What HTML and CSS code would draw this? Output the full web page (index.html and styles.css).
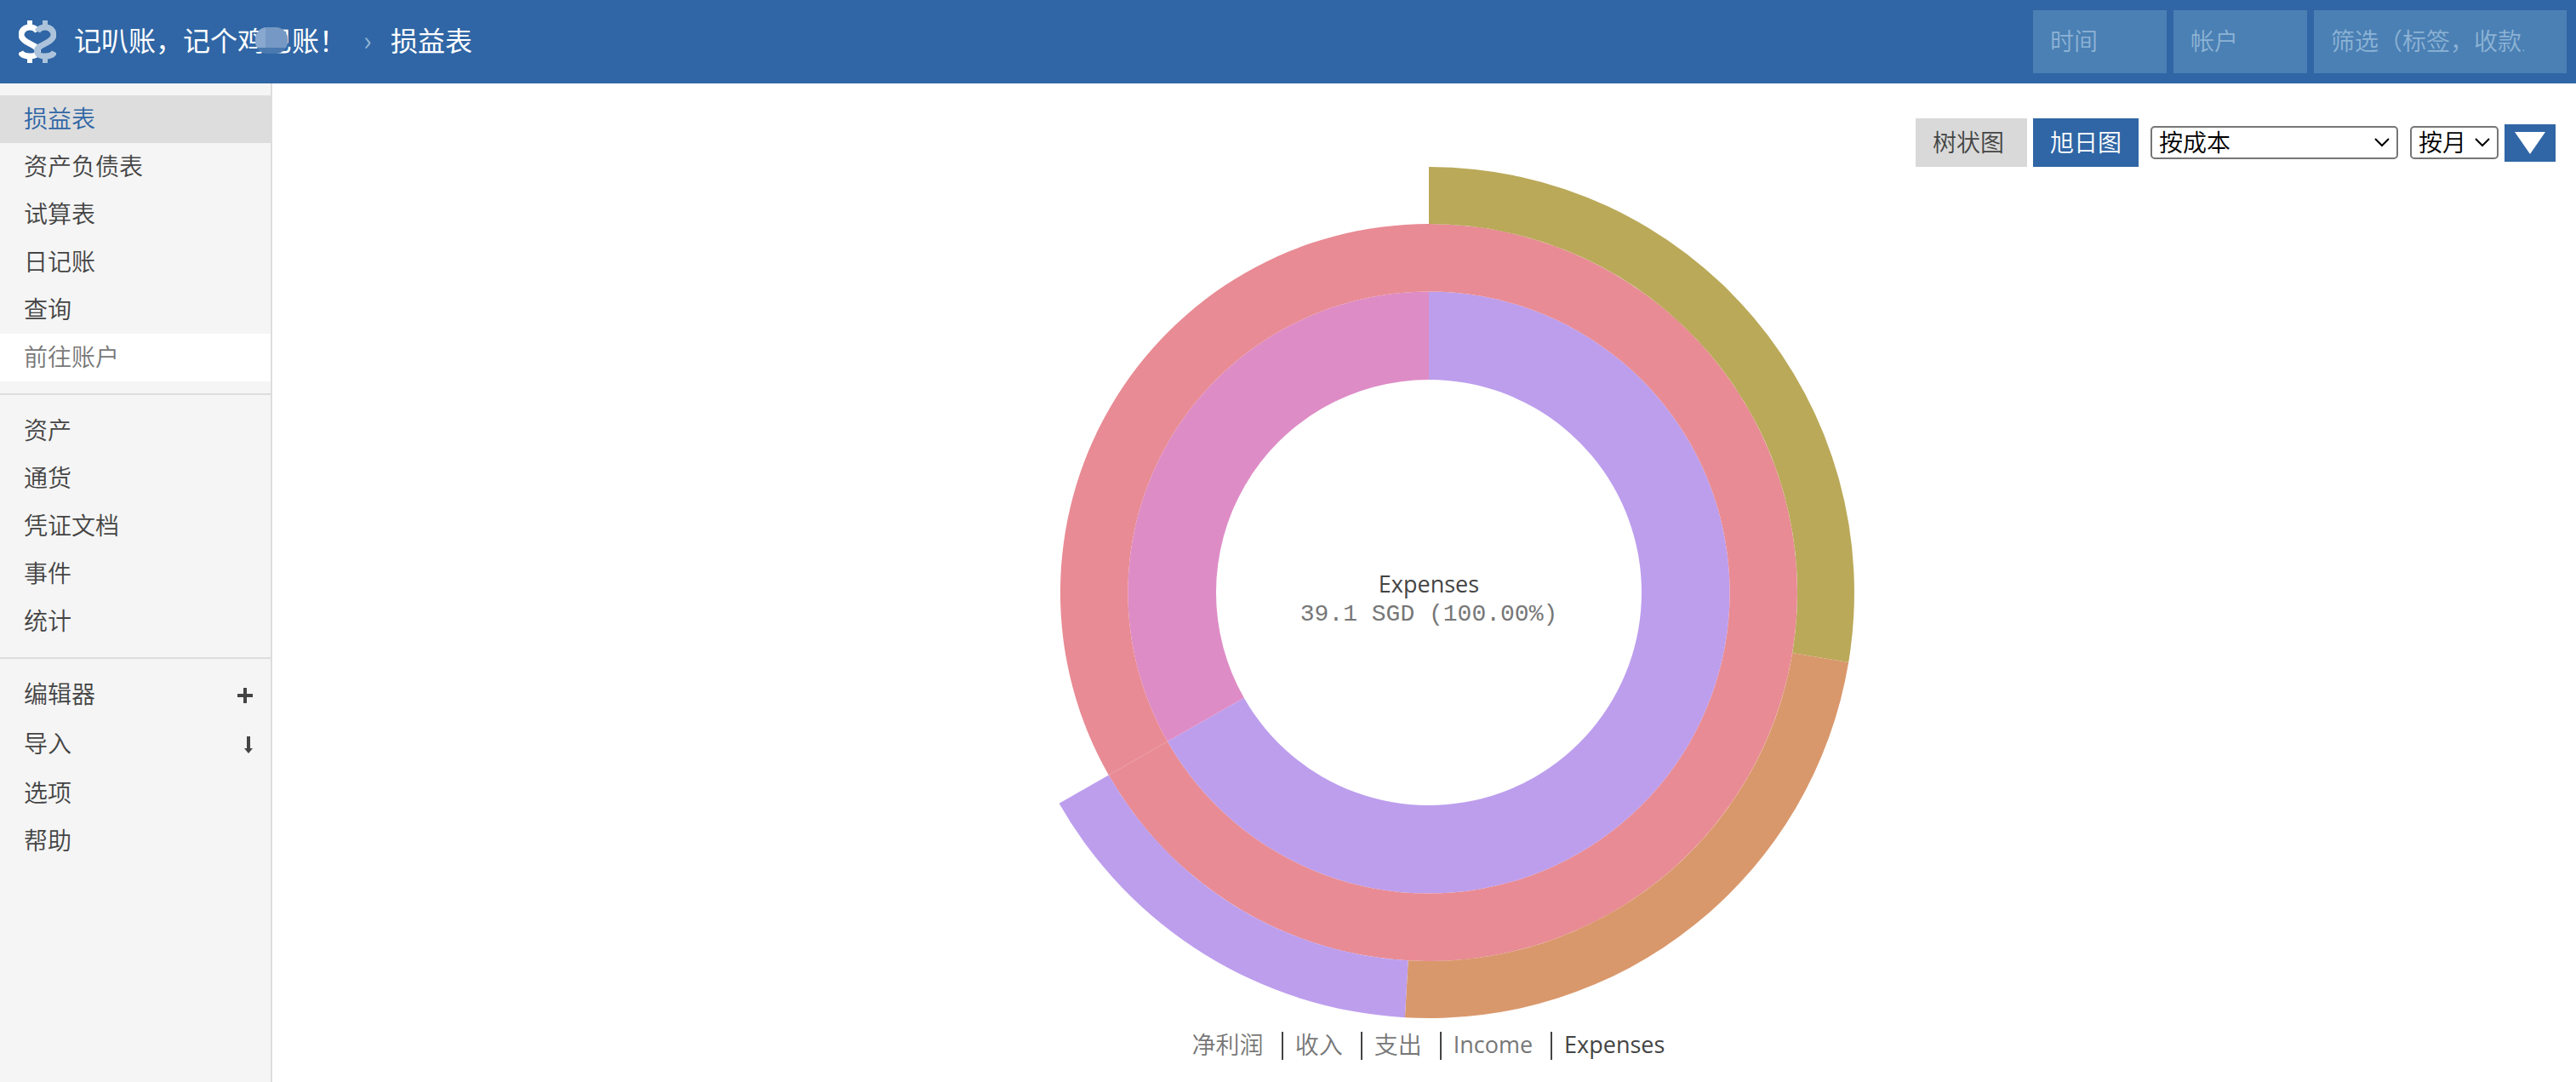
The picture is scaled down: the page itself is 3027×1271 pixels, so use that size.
FILE: index.html
```html
<!DOCTYPE html>
<html lang="zh-CN">
<head>
<meta charset="utf-8">
<title>损益表</title>
<link rel="stylesheet" href="styles.css">
</head>
<body>
<header class="header">
  <svg class="logo" viewBox="0 0 44 50" aria-hidden="true">
    <g class="logo-left"><path class="bar" d="M13 0v8M13 42v8"/><path d="M22 13C20 9 16 8 13 8C6 8 3 13 3 17C3 21 6 23 9 25L18 30C22 32 23 35 22 38C21 41 17 42 13 42C8 42 4 41 2 37"/></g>
    <g class="logo-right" transform="translate(44 0) scale(-1 1)"><path class="bar" d="M13 0v8M13 42v8"/><path d="M22 13C20 9 16 8 13 8C6 8 3 13 3 17C3 21 6 23 9 25L18 30C22 32 23 35 22 38C21 41 17 42 13 42C8 42 4 41 2 37"/></g>
  </svg>
  <h1 class="title"><span class="ledger">记叭账，记个鸡巴账！<i class="smudge"></i></span><span class="crumb">›</span><span>损益表</span></h1>
  <form class="filters">
    <input class="filter" type="text" placeholder="时间" aria-label="时间">
    <input class="filter" type="text" placeholder="帐户" aria-label="帐户">
    <input class="filter wide" type="text" placeholder="筛选（标签，收款人" aria-label="筛选">
  </form>
</header>
<div class="body">
  <aside class="sidebar">
    <ul class="menu">
      <li><a class="link selected" href="#">损益表</a></li>
      <li><a class="link" href="#">资产负债表</a></li>
      <li><a class="link" href="#">试算表</a></li>
      <li><a class="link" href="#">日记账</a></li>
      <li><a class="link" href="#">查询</a></li>
      <li><input class="goto" type="text" placeholder="前往账户" aria-label="前往账户"></li>
    </ul>
    <ul class="menu">
      <li><a class="link" href="#">资产</a></li>
      <li><a class="link" href="#">通货</a></li>
      <li><a class="link" href="#">凭证文档</a></li>
      <li><a class="link" href="#">事件</a></li>
      <li><a class="link" href="#">统计</a></li>
    </ul>
    <ul class="menu">
      <li><a class="link tall" href="#">编辑器<svg class="mark" viewBox="0 0 18 20" aria-hidden="true"><path d="M9 1v18M0 10h18"/></svg></a></li>
      <li><a class="link tall" href="#">导入<svg class="mark arrow" viewBox="0 0 10 20" aria-hidden="true"><path class="shaft" d="M5 0v16"/><path class="head" d="M0 14h10L5 20z"/></svg></a></li>
      <li><a class="link" href="#">选项</a></li>
      <li><a class="link" href="#">帮助</a></li>
    </ul>
  </aside>
  <main class="main">
    <div class="controls">
      <button class="mode first" type="button">树状图</button>
      <button class="mode on" type="button">旭日图</button>
      <select class="pick cost" aria-label="换算"><option>按成本</option></select>
      <select class="pick" aria-label="间隔"><option>按月</option></select>
      <button class="toggle" type="button" aria-label="切换图表"><svg viewBox="0 0 36 26" aria-hidden="true"><path d="M0 0h36L18 26z"/></svg></button>
    </div>
    <svg class="sunburst" viewBox="-500 -500 1000 1000" role="img" aria-label="Expenses">
      <path fill="#bd9eed" d="M0-353.600A353.600 353.600 0 1 1-307.200 175.100L-217.200 123.800A250 250 0 1 0 0-250z"/>
      <path fill="#de8cc6" d="M-307.200 175.100A353.600 353.600 0 0 1 0-353.600V-250A250 250 0 0 0-217.200 123.800z"/>
      <path fill="#e88b94" d="M0-433A433 433 0 1 1-376.200 214.500L-307.200 175.100A353.600 353.600 0 1 0 0-353.600z"/>
      <path fill="#e88b94" d="M-376.200 214.500A433 433 0 0 1 0-433V-353.600A353.600 353.600 0 0 0-307.200 175.100z"/>
      <path fill="#baa959" d="M0-500A500 500 0 0 1 493.200 82L427.200 71A433 433 0 0 0 0-433z"/>
      <path fill="#d9986c" d="M493.200 82A500 500 0 0 1-28.100 499.200L-24.300 432.300A433 433 0 0 0 427.200 71z"/>
      <path fill="#bd9eed" d="M-28.100 499.200A500 500 0 0 1-434.400 247.700L-376.200 214.500A433 433 0 0 0-24.300 432.300z"/>
      <text class="account" y="0" text-anchor="middle">Expenses</text>
      <text class="amount" y="33" text-anchor="middle">39.1 SGD (100.00%)</text>
    </svg>
    <nav class="charts">
      <button class="chart" type="button">净利润</button>
      <button class="chart" type="button">收入</button>
      <button class="chart" type="button">支出</button>
      <button class="chart latin" type="button">Income</button>
      <button class="chart latin current" type="button">Expenses</button>
    </nav>
  </main>
</div>
</body>
</html>
```
FILE: styles.css
```css
* { box-sizing: border-box; }
body { margin: 0; min-height: 100vh; display: flex; flex-direction: column; font: 28px/34px "Noto Sans CJK SC", sans-serif; font-weight: 350; color: #444; background: #fff; }
button, input, select { font: inherit; border: 0; border-radius: 0; margin: 0; }
.header { display: flex; align-items: center; height: 98px; padding: 0 11px 0 22px; background: #3066a5; color: #fff; }
.logo { width: 44px; height: 50px; margin-right: 21px; fill: none; stroke-width: 7; }
.logo .bar { stroke-width: 6; }
.logo-left { stroke: #fff; }
.logo-right { stroke: #acc3db; }
.title { margin: 0; padding-bottom: 6px; font-size: 32px; line-height: 48px; font-weight: 400; display: flex; }
.ledger { position: relative; }
.smudge { position: absolute; left: 213px; top: 10px; width: 38px; height: 31px; border-radius: 14px; background: linear-gradient(90deg, #88a8cf 12px, #7599c4 12px) 0 0 / 100% 24px no-repeat #4a79b0; }
.crumb { width: 52px; padding-left: 20px; color: #8fb3d4; }
.filters { display: flex; gap: 8px; margin-left: auto; }
.filter { width: 157px; height: 74px; padding: 0 20px 4px; background: #4b80b4; color: #fff; }
.filter.wide { width: 297px; padding-right: 50px; }
.filter::placeholder { color: #8db3d5; opacity: 1; }
.body { flex: 1; display: flex; }
.sidebar { width: 320px; padding-top: 14px; background: #f5f5f5; border-right: 2px solid #ddd; }
.menu { list-style: none; margin: 0; padding: 0 0 14px; }
.menu + .menu { border-top: 2px solid #ddd; padding-top: 14px; }
.link { display: flex; align-items: center; justify-content: space-between; height: 56px; padding: 0 21px 4px 28px; color: #444; text-decoration: none; }
.link.tall { height: 58px; padding-bottom: 6px; }
.link.selected { background: #ddd; color: #3066a5; }
.mark { width: 18px; height: 20px; margin-top: 6px; stroke: #444; stroke-width: 4; }
.mark.arrow { width: 10px; }
.mark .head { fill: #444; stroke: none; }
.goto { display: block; width: 100%; height: 56px; padding: 0 28px 4px; background: #fff; }
.goto::placeholder { color: #777; opacity: 1; }
.main { flex: 1; display: flex; flex-direction: column; align-items: center; padding: 41px 24px 0 34px; }
.controls { align-self: stretch; display: flex; justify-content: flex-end; align-items: center; height: 57px; }
.mode { height: 57px; padding: 0 20px 4px; background: #d9d9d9; color: #444; }
.mode.first { padding-right: 27px; margin-right: 7px; }
.mode.on { background: #3066a5; color: #fff; }
.pick { appearance: none; width: 104px; height: 39px; margin-left: 14px; padding: 0 30px 3px 8px; border: 2px solid #767676; border-radius: 5px; color: #000; line-height: 32px; background: #fff url("data:image/svg+xml,%3Csvg xmlns='http://www.w3.org/2000/svg' width='18' height='11' fill='none' stroke='black' stroke-width='2'%3E%3Cpath d='M1 1l8 8 8-8'/%3E%3C/svg%3E") right 8px center no-repeat; }
.pick.cost { width: 291px; }
.toggle { display: flex; align-items: center; justify-content: center; width: 60px; height: 44px; margin-left: 7px; padding: 0; background: #3066a5; }
.toggle svg { width: 36px; height: 26px; fill: #fff; }
.sunburst { width: 1000px; height: 1000px; max-width: 100%; }
.account { fill: #444; font-family: "Open Sans", sans-serif; font-size: 27px; font-weight: 400; }
.amount { fill: #777; font-family: "Liberation Mono", monospace; }
.charts { display: flex; padding-top: 16px; }
.chart { height: 33px; line-height: 29px; padding: 0 21px 4px 14px; background: none; color: #777; border-left: 2px solid #444; }
.chart:first-child { border-left: 0; padding-left: 0; }
.chart.latin { font-family: "Open Sans", sans-serif; font-size: 27px; font-weight: 400; }
.chart.current { color: #444; padding-right: 0; }
```
